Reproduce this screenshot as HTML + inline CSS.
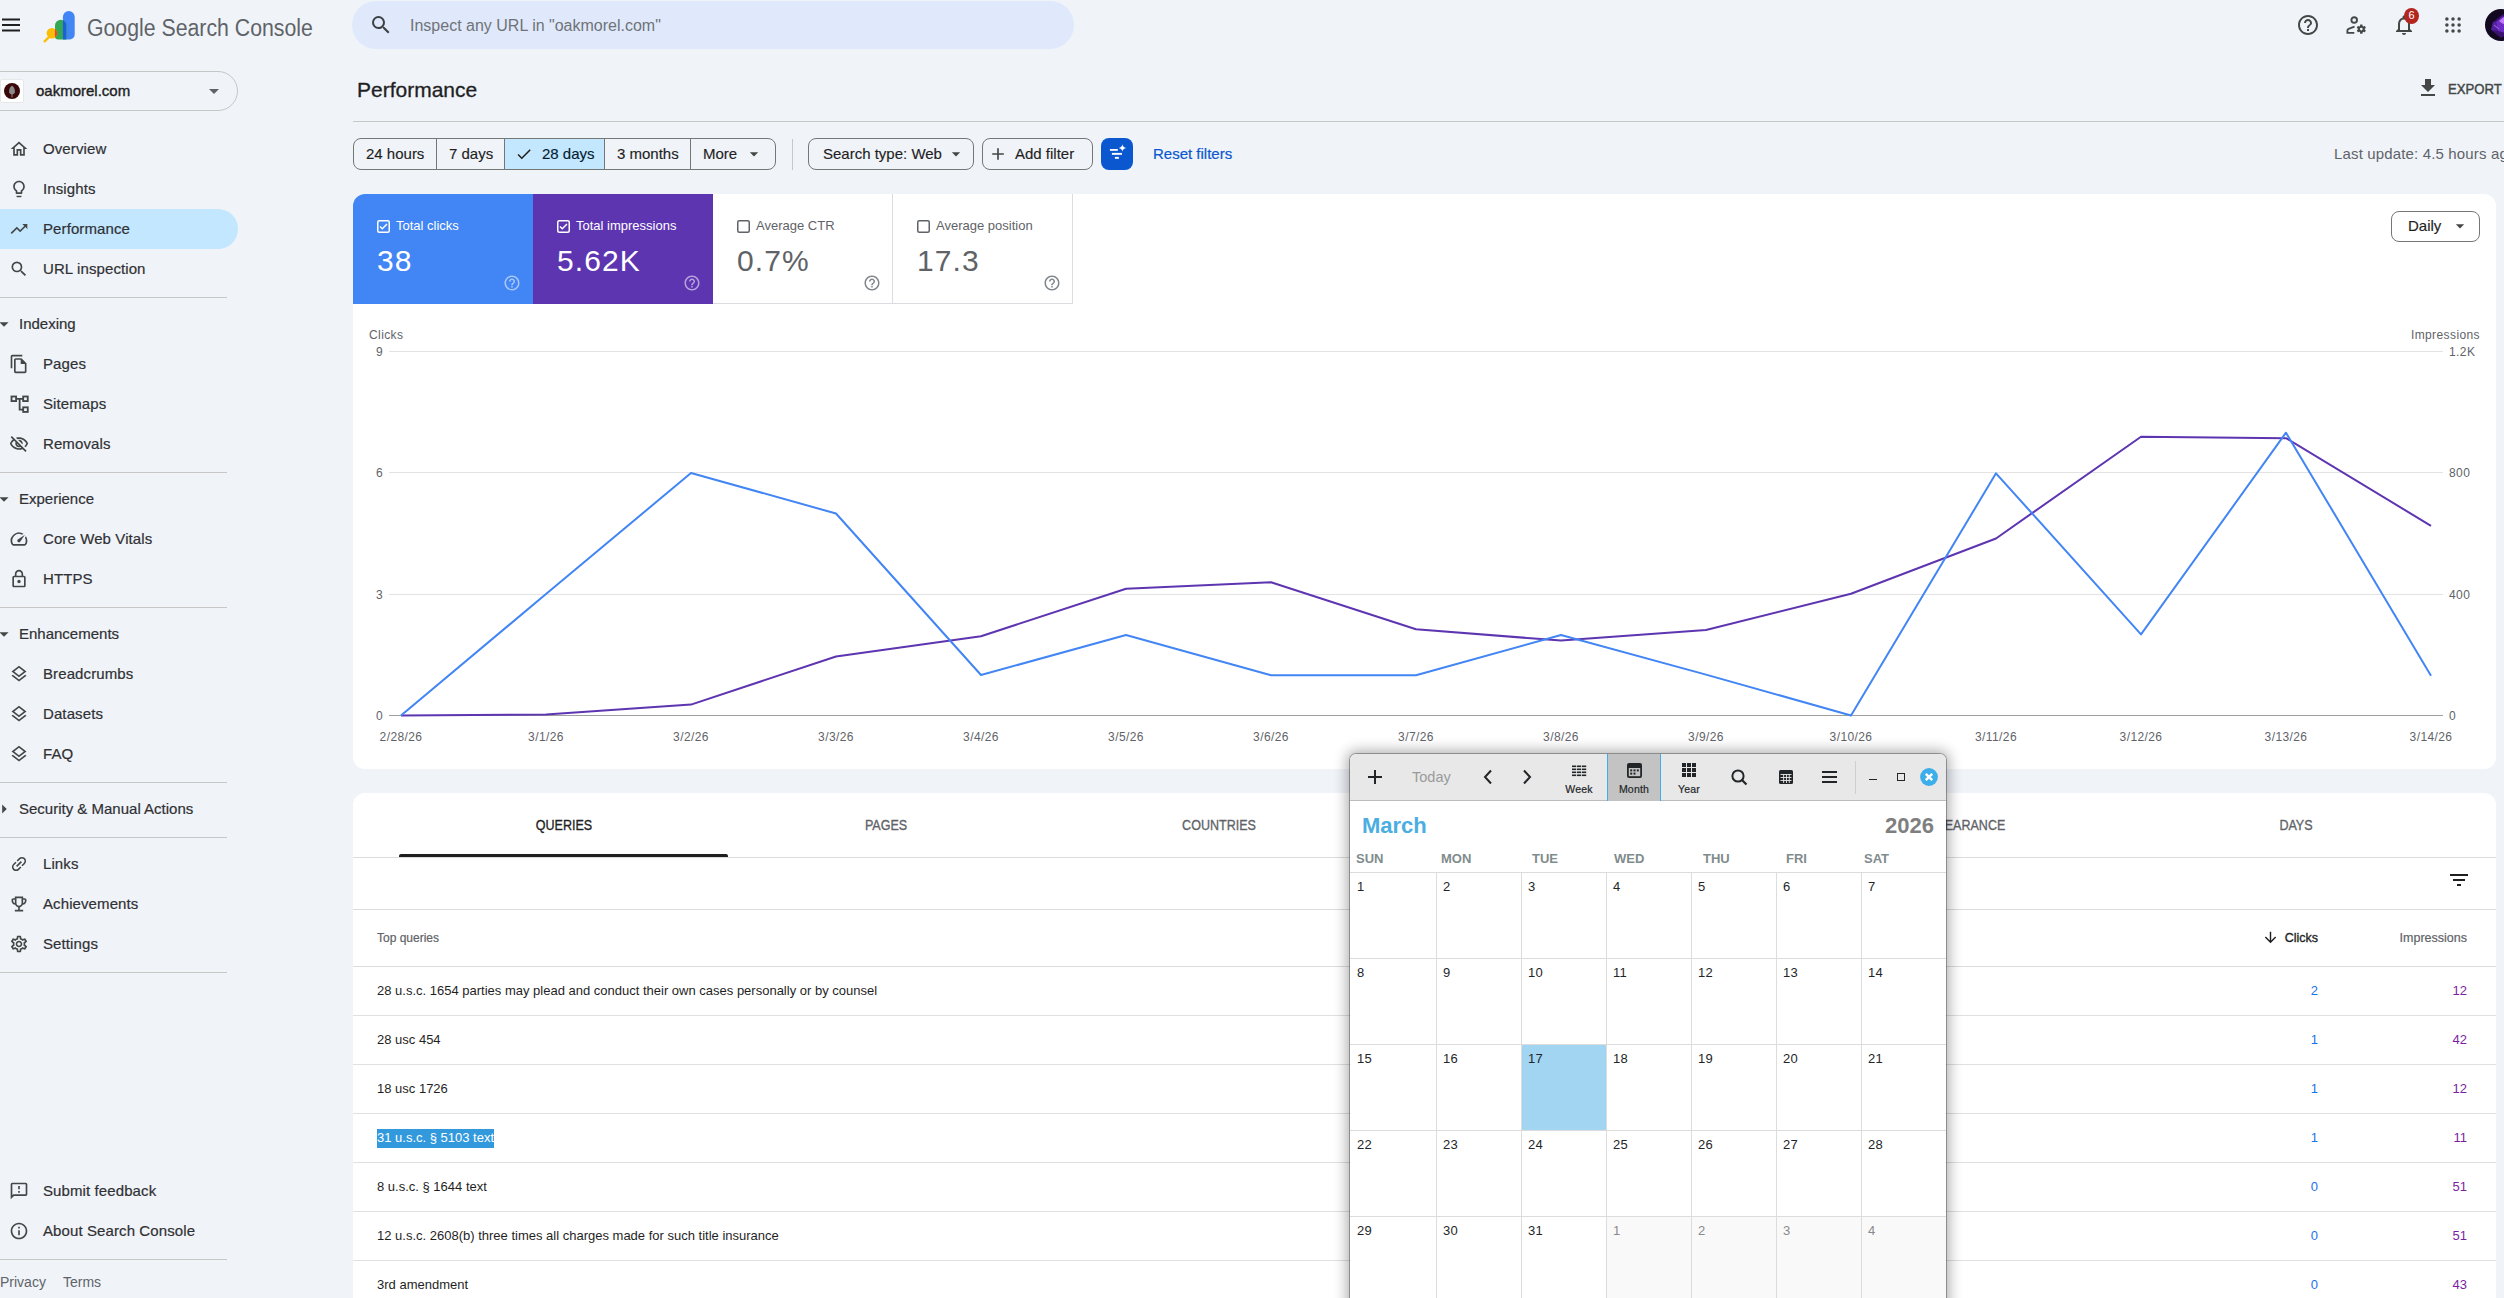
<!DOCTYPE html>
<html><head><meta charset="utf-8">
<style>
*{box-sizing:border-box;margin:0;padding:0}
html,body{width:2504px;height:1298px;overflow:hidden}
body{background:#f0f4f9;font-family:"Liberation Sans",sans-serif;color:#1f1f1f;position:relative}
.a{position:absolute;white-space:nowrap}
svg{display:block}
.nav{position:absolute;left:0;width:238px;height:40px;font-size:15px;color:#303134;line-height:40px}
.nav svg{position:absolute;left:9px;top:10.5px;width:20px;height:20px;fill:#444746}
.nav span{position:absolute;left:43px;top:1px;letter-spacing:0.1px;-webkit-text-stroke:0.2px #303134}
.sec{position:absolute;left:0;height:30px;white-space:nowrap;line-height:30px;font-size:15px;color:#303134}
.sec svg{position:absolute;left:-7px;top:5px;width:22px;height:22px;fill:#444746}
.sec span{position:absolute;left:19px;top:1px;-webkit-text-stroke:0.2px #303134}
.div{position:absolute;left:0;width:227px;height:1px;background:#c7c7c7}
.chip{font-size:15px;line-height:18px;color:#1f1f1f;-webkit-text-stroke:0.15px #1f1f1f}
.ml{font-size:13px;line-height:16px}
.mv{font-size:30px;line-height:34px;letter-spacing:1.1px}
.trow{font-size:13px;line-height:18px;color:#1f1f1f}
.calbl{font-size:10.5px;line-height:14px;color:#232629;text-align:center;-webkit-text-stroke:0.2px #232629;letter-spacing:0.2px}
</style></head><body>

<!-- HEADER -->
<svg class="a" style="left:0;top:12px" width="24" height="24" viewBox="0 0 24 24"><path fill="#1f1f1f" d="M2 19.5h18v-2H2zm0-5.5h18v-2H2zm0-7.5v2h18v-2z"/></svg>
<svg class="a" style="left:0;top:0" width="80" height="48" viewBox="0 0 80 48">
 <defs><clipPath id="gclip"><path d="M55 25.45a5.75 5.75 0 0 1 11.5 0V39.4H58a3 3 0 0 1-3-3z"/></clipPath></defs>
 <path d="M62.9 17a5.9 5.9 0 0 1 11.8 0V34.4a5 5 0 0 1-5 5H62.9z" fill="#4285f4"/>
 <path d="M55 25.45a5.75 5.75 0 0 1 11.5 0V39.4H58a3 3 0 0 1-3-3z" fill="#34a853"/>
 <rect x="62.9" y="19" width="3.6" height="20.4" fill="#1a62d6" clip-path="url(#gclip)"/>
 <path d="M44.6 41.4L48.6 37.4" stroke="#fbbc04" stroke-width="2.3" stroke-linecap="round"/>
 <circle cx="51.9" cy="33.3" r="5.3" fill="#fbbc04"/>
 <g clip-path="url(#gclip)"><circle cx="51.9" cy="33.3" r="5.3" fill="#ea4335"/></g>
</svg>
<div class="a" style="left:87px;top:13px;font-size:23.5px;line-height:30px;color:#5f6368;transform:scaleX(0.905);transform-origin:0 0">Google Search Console</div>

<div class="a" style="left:352px;top:1px;width:722px;height:48px;border-radius:24px;background:#e0e9fb"></div>
<svg class="a" style="left:369px;top:13px" width="24" height="24" viewBox="0 0 24 24"><path fill="#3c4043" d="M15.5 14h-.79l-.28-.27A6.47 6.47 0 0 0 16 9.5 6.5 6.5 0 1 0 9.5 16c1.61 0 3.09-.59 4.23-1.57l.27.28v.79l5 4.99L20.49 19l-4.99-5zm-6 0C7.01 14 5 11.99 5 9.5S7.01 5 9.5 5 14 7.01 14 9.5 11.99 14 9.5 14z"/></svg>
<div class="a" style="left:410px;top:16px;font-size:16px;line-height:20px;color:#6f7378">Inspect any URL in "oakmorel.com"</div>

<!-- right header icons -->
<svg class="a" style="left:2296px;top:13px" width="24" height="24" viewBox="0 0 24 24"><path fill="#444746" d="M11 18h2v-2h-2v2zm1-16C6.48 2 2 6.48 2 12s4.48 10 10 10 10-4.48 10-10S17.52 2 12 2zm0 18c-4.41 0-8-3.59-8-8s3.59-8 8-8 8 3.59 8 8-3.59 8-8 8zm0-14c-2.21 0-4 1.79-4 4h2c0-1.1.9-2 2-2s2 .9 2 2c0 2-3 1.75-3 5h2c0-2.25 3-2.5 3-5 0-2.21-1.79-4-4-4z"/></svg>
<svg class="a" style="left:2344px;top:13px" width="24" height="24" viewBox="0 0 24 24"><circle cx="10.2" cy="7" r="2.8" fill="none" stroke="#444746" stroke-width="1.9"/><path d="M10.5 13.6L4.6 15.8Q3.4 16.3 3.4 17.6V19.9H10.3" fill="none" stroke="#444746" stroke-width="1.9" stroke-linejoin="miter"/><g transform="translate(11.8 10.6) scale(0.46)"><path fill="#444746" d="M19.43 12.98c.04-.32.07-.64.07-.98 0-.34-.03-.66-.07-.98l2.11-1.65c.19-.15.24-.42.12-.64l-2-3.46a.5.5 0 0 0-.61-.22l-2.49 1c-.52-.4-1.08-.73-1.69-.98l-.38-2.65A.488.488 0 0 0 14 2h-4c-.25 0-.46.18-.49.42l-.38 2.65c-.61.25-1.17.59-1.69.98l-2.49-1a.566.566 0 0 0-.18-.03c-.17 0-.34.09-.43.25l-2 3.46c-.13.22-.07.49.12.64l2.11 1.65c-.04.32-.07.65-.07.98 0 .33.03.66.07.98l-2.110 1.65c-.19.15-.24.42-.12.64l2 3.46a.5.5 0 0 0 .61.22l2.49-1c.52.4 1.08.73 1.69.98l.38 2.65c.03.24.24.42.49.42h4c.25 0 .46-.18.49-.42l.38-2.65c.61-.25 1.17-.59 1.69-.98l2.49 1c.06.02.12.03.18.03.17 0 .34-.09.43-.25l2-3.46c.12-.22.07-.49-.12-.64l-2.11-1.65zM12 15a3 3 0 1 1 0-6 3 3 0 0 1 0 6z"/></g></svg>
<svg class="a" style="left:2392px;top:13px" width="24" height="24" viewBox="0 0 24 24"><path fill="#444746" d="M12 22c1.1 0 2-.9 2-2h-4c0 1.1.9 2 2 2zm6-6v-5c0-3.07-1.63-5.64-4.5-6.32V4c0-.83-.67-1.5-1.5-1.5s-1.5.67-1.5 1.5v.68C7.64 5.36 6 7.92 6 11v5l-2 2v1h16v-1l-2-2zm-2 1H8v-6c0-2.48 1.51-4.5 4-4.5s4 2.02 4 4.5v6z"/></svg>
<div class="a" style="left:2404px;top:8px;width:15px;height:16px;border-radius:50%;background:#b3261e;color:#fff;font-size:11px;line-height:15px;text-align:center">6</div>
<svg class="a" style="left:2441px;top:13px" width="24" height="24" viewBox="0 0 24 24"><g fill="#444746"><circle cx="5.9" cy="5.9" r="1.75"/><circle cx="12" cy="5.9" r="1.75"/><circle cx="18.1" cy="5.9" r="1.75"/><circle cx="5.9" cy="12" r="1.75"/><circle cx="12" cy="12" r="1.75"/><circle cx="18.1" cy="12" r="1.75"/><circle cx="5.9" cy="18.1" r="1.75"/><circle cx="12" cy="18.1" r="1.75"/><circle cx="18.1" cy="18.1" r="1.75"/></g></svg>
<svg class="a" style="left:2485px;top:9px" width="32" height="32" viewBox="0 0 32 32"><circle cx="16" cy="16" r="16" fill="#12081f"/><path d="M8 13L18 5 28 11 27 23 16 29 6 21z" fill="#3a136e"/><path d="M11 13L18 7 23 12 21 24 13 22z" fill="#6d2cc4"/><path d="M14 12L19 8 22 13 18 15z" fill="#c07cf7"/><path d="M8 13L11 13 13 22 6 21z" fill="#51209a"/><path d="M9 16L14 20" stroke="#c47dff" stroke-width="0.8"/></svg>

<!-- SIDEBAR -->
<div class="a" style="left:-20px;top:71px;width:258px;height:40px;border:1px solid #c4c7c5;border-radius:20px"></div>
<div class="a" style="left:0;top:79px;width:24px;height:24px;background:#fff;border:1px solid #e8e8e8;border-radius:2px"></div>
<div class="a" style="left:4px;top:83px;width:16px;height:16px;border-radius:50%;background:#3a0808"></div>
<svg class="a" style="left:8px;top:85px" width="8" height="13" viewBox="0 0 8 13"><path d="M4 0.5C1.5 2 0.8 5 1.2 7.5 1.8 9 3 9.2 4 9.2s2.2-.2 2.8-1.7C7.2 5 6.5 2 4 0.5z" fill="#8a8a8a"/><path d="M4 8v4.5" stroke="#8a8a8a" stroke-width="1"/></svg>
<div class="a" style="left:36px;top:81px;font-size:15px;line-height:20px;color:#1f1f1f;-webkit-text-stroke:0.4px #1f1f1f">oakmorel.com</div>
<svg class="a" style="left:202px;top:79px" width="24" height="24" viewBox="0 0 24 24"><path fill="#5f6368" d="M7 10l5 5 5-5z"/></svg>

<div class="a" style="left:0;top:209px;width:238px;height:40px;border-radius:0 20px 20px 0;background:#c2e7ff"></div>
<div class="nav" style="top:128px"><svg viewBox="0 0 24 24"><path d="M12 5.69l5 4.5V18h-2v-6H9v6H7v-7.81l5-4.5M12 3L2 12h3v8h6v-6h2v6h6v-8h3L12 3z"/></svg><span>Overview</span></div>
<div class="nav" style="top:168px"><svg viewBox="0 0 24 24"><path d="M9 21c0 .55.45 1 1 1h4c.55 0 1-.45 1-1v-1H9v1zm3-19C8.14 2 5 5.14 5 9c0 2.38 1.19 4.47 3 5.74V17c0 .55.45 1 1 1h6c.55 0 1-.45 1-1v-2.26c1.81-1.27 3-3.36 3-5.74 0-3.86-3.14-7-7-7zm2.85 11.1l-.85.6V16h-4v-2.3l-.85-.6C7.8 12.16 7 10.63 7 9c0-2.76 2.24-5 5-5s5 2.24 5 5c0 1.63-.8 3.16-2.15 4.1z"/></svg><span>Insights</span></div>
<div class="nav" style="top:208px"><svg viewBox="0 0 24 24"><path d="M16 6l2.29 2.29-4.88 4.88-4-4L2 16.59 3.41 18l6-6 4 4 6.3-6.29L22 12V6z"/></svg><span>Performance</span></div>
<div class="nav" style="top:248px"><svg viewBox="0 0 24 24"><path d="M15.5 14h-.79l-.28-.27A6.47 6.47 0 0 0 16 9.5 6.5 6.5 0 1 0 9.5 16c1.61 0 3.09-.59 4.23-1.57l.27.28v.79l5 4.99L20.49 19l-4.99-5zm-6 0C7.01 14 5 11.99 5 9.5S7.01 5 9.5 5 14 7.01 14 9.5 11.99 14 9.5 14z"/></svg><span>URL inspection</span></div>
<div class="nav" style="top:343px"><svg viewBox="0 0 24 24"><path d="M16 1H4c-1.1 0-2 .9-2 2v14h2V3h12V1zm-1 4H8c-1.1 0-1.99.9-1.99 2L6 21c0 1.1.89 2 1.99 2H19c1.1 0 2-.9 2-2V11l-6-6zM8 21V7h6v5h5v9H8z"/></svg><span>Pages</span></div>
<div class="nav" style="top:383px"><svg viewBox="0 0 24 24"><g fill="none" stroke="#444746" stroke-width="2.2"><rect x="3" y="3" width="5.5" height="5.5"/><rect x="17" y="3" width="5.5" height="5.5"/><rect x="17" y="16" width="5.5" height="5.5"/><path d="M8.5 5.75H17M12.75 5.75v13H17"/></g></svg><span>Sitemaps</span></div>
<div class="nav" style="top:423px"><svg viewBox="0 0 24 24"><path d="M12 6c3.79 0 7.17 2.13 8.82 5.5-.59 1.22-1.42 2.27-2.41 3.12l1.41 1.41c1.39-1.23 2.49-2.77 3.18-4.53C21.27 7.11 17 4 12 4c-1.27 0-2.49.2-3.64.57l1.65 1.65C10.66 6.09 11.32 6 12 6zm-1.07 1.14L13 9.21c.57.25 1.03.71 1.28 1.28l2.07 2.07c.08-.34.14-.7.14-1.07C16.5 9.01 14.48 7 12 7c-.37 0-.72.05-1.07.14zM2.01 3.87l2.68 2.68C3.06 7.83 1.77 9.530 1 11.5 2.73 15.89 7 19 12 19c1.52 0 2.98-.29 4.32-.82l3.420 3.42 1.41-1.41L3.42 2.45 2.01 3.87zm7.5 7.5l2.61 2.61c-.04.01-.08.02-.12.02-1.38 0-2.5-1.12-2.5-2.5 0-.05.01-.08.01-.13zm-3.4-3.4l1.75 1.75c-.23.55-.36 1.15-.36 1.78 0 2.48 2.02 4.5 4.5 4.5.63 0 1.23-.13 1.77-.36l.98.98c-.88.24-1.8.38-2.75.38-3.79 0-7.17-2.13-8.820-5.5.7-1.43 1.72-2.61 2.93-3.53z"/></svg><span>Removals</span></div>
<div class="nav" style="top:518px"><svg viewBox="0 0 24 24"><path d="M20.38 8.57l-1.23 1.85a8 8 0 0 1-.22 7.58H5.07A8 8 0 0 1 15.58 6.85l1.85-1.23A10 10 0 0 0 3.35 19a2 2 0 0 0 1.72 1h13.85a2 2 0 0 0 1.74-1 10 10 0 0 0-.27-10.44zm-9.79 6.84a2 2 0 0 0 2.830 0l5.66-8.49-8.49 5.66a2 2 0 0 0 0 2.83z"/></svg><span>Core Web Vitals</span></div>
<div class="nav" style="top:558px"><svg viewBox="0 0 24 24"><path d="M18 8h-1V6c0-2.76-2.24-5-5-5S7 3.24 7 6v2H6c-1.1 0-2 .9-2 2v10c0 1.1.9 2 2 2h12c1.1 0 2-.9 2-2V10c0-1.1-.9-2-2-2zM9 6c0-1.66 1.34-3 3-3s3 1.34 3 3v2H9V6zm9 14H6V10h12v10zm-6-3c1.1 0 2-.9 2-2s-.9-2-2-2-2 .9-2 2 .9 2 2 2z"/></svg><span>HTTPS</span></div>
<div class="nav" style="top:653px"><svg viewBox="0 0 24 24"><path d="M11.99 18.54l-7.37-5.73L3 14.07l9 7 9-7-1.63-1.27-7.38 5.74zM12 16l7.36-5.73L21 9l-9-7-9 7 1.63 1.27L12 16zm0-11.47L17.74 9 12 13.47 6.26 9 12 4.53z"/></svg><span>Breadcrumbs</span></div>
<div class="nav" style="top:693px"><svg viewBox="0 0 24 24"><path d="M11.99 18.54l-7.37-5.73L3 14.07l9 7 9-7-1.63-1.27-7.38 5.74zM12 16l7.36-5.73L21 9l-9-7-9 7 1.63 1.27L12 16zm0-11.47L17.74 9 12 13.47 6.26 9 12 4.53z"/></svg><span>Datasets</span></div>
<div class="nav" style="top:733px"><svg viewBox="0 0 24 24"><path d="M11.99 18.54l-7.37-5.73L3 14.07l9 7 9-7-1.63-1.27-7.38 5.74zM12 16l7.36-5.73L21 9l-9-7-9 7 1.63 1.27L12 16zm0-11.47L17.74 9 12 13.47 6.26 9 12 4.53z"/></svg><span>FAQ</span></div>
<div class="nav" style="top:843px"><svg viewBox="0 0 24 24"><g transform="rotate(-45 12 12)"><path d="M3.9 12c0-1.71 1.39-3.1 3.1-3.1h4V7H7c-2.760 0-5 2.24-5 5s2.24 5 5 5h4v-1.9H7c-1.71 0-3.1-1.39-3.1-3.1zM8 13h8v-2H8v2zm9-6h-4v1.9h4c1.71 0 3.1 1.39 3.1 3.1s-1.39 3.1-3.1 3.1h-4V17h4c2.76 0 5-2.24 5-5s-2.24-5-5-5z"/></g></svg><span>Links</span></div>
<div class="nav" style="top:883px"><svg viewBox="0 0 24 24"><path d="M19 5h-2V3H7v2H5c-1.1 0-2 .9-2 2v1c0 2.55 1.92 4.63 4.39 4.94.63 1.5 1.98 2.63 3.61 2.96V19H7v2h10v-2h-4v-3.1c1.63-.33 2.98-1.46 3.61-2.96C19.08 12.63 21 10.55 21 8V7c0-1.1-.9-2-2-2zM5 8V7h2v3.82C5.84 10.4 5 9.3 5 8zm7 6c-1.65 0-3-1.35-3-3V5h6v6c0 1.65-1.35 3-3 3zm7-6c0 1.3-.84 2.4-2 2.82V7h2v1z"/></svg><span>Achievements</span></div>
<div class="nav" style="top:923px"><svg viewBox="0 0 24 24"><path d="M19.43 12.98c.04-.32.07-.64.07-.98 0-.34-.03-.66-.07-.98l2.11-1.65c.19-.15.24-.42.12-.64l-2-3.46a.5.5 0 0 0-.61-.22l-2.49 1c-.52-.4-1.08-.73-1.69-.98l-.38-2.65A.488.488 0 0 0 14 2h-4c-.25 0-.46.18-.49.42l-.38 2.65c-.61.25-1.17.59-1.69.98l-2.49-1a.566.566 0 0 0-.18-.03c-.17 0-.34.09-.43.25l-2 3.46c-.13.22-.07.49.12.64l2.11 1.65c-.04.32-.07.65-.07.98 0 .33.03.66.07.98l-2.11 1.65c-.19.15-.24.42-.12.64l2 3.46a.5.5 0 0 0 .61.22l2.49-1c.52.4 1.08.73 1.69.98l.38 2.65c.03.24.24.42.49.42h4c.25 0 .46-.18.49-.42l.38-2.65c.61-.25 1.17-.59 1.690-.98l2.49 1c.06.02.12.03.18.03.17 0 .34-.09.43-.25l2-3.46c.12-.22.07-.49-.12-.64l-2.11-1.65zm-1.98-1.71c.04.31.05.52.05.73 0 .21-.02.43-.05.73l-.14 1.13.89.7 1.08.84-.7 1.21-1.27-.51-1.04-.42-.9.68c-.43.32-.84.56-1.25.73l-1.06.43-.16 1.13-.2 1.35h-1.4l-.19-1.35-.16-1.13-1.06-.43c-.43-.18-.83-.41-1.23-.71l-.91-.7-1.06.43-1.27.51-.7-1.21 1.08-.84.89-.7-.14-1.13c-.03-.31-.05-.54-.05-.74s.02-.43.05-.73l.14-1.13-.89-.7-1.08-.84.7-1.21 1.27.51 1.04.42.9-.68c.43-.32.84-.56 1.25-.73l1.06-.43.16-1.13.2-1.35h1.39l.19 1.35.16 1.13 1.06.43c.43.18.83.41 1.23.71l.91.7 1.06-.43 1.27-.51.7 1.21-1.07.85-.89.7.14 1.130zM12 8c-2.21 0-4 1.79-4 4s1.79 4 4 4 4-1.79 4-4-1.79-4-4-4zm0 6c-1.1 0-2-.9-2-2s.9-2 2-2 2 .9 2 2-.9 2-2 2z"/></svg><span>Settings</span></div>
<div class="nav" style="top:1170px"><svg viewBox="0 0 24 24"><path d="M20 2H4c-1.1 0-1.99.9-1.99 2L2 22l4-4h14c1.1 0 2-.9 2-2V4c0-1.1-.9-2-2-2zm0 14H5.17l-.59.59-.58.58V4h16v12zm-9-4h2v2h-2zm0-6h2v4h-2z"/></svg><span>Submit feedback</span></div>
<div class="nav" style="top:1210px"><svg viewBox="0 0 24 24"><path d="M11 7h2v2h-2zm0 4h2v6h-2zm1-9C6.48 2 2 6.48 2 12s4.48 10 10 10 10-4.48 10-10S17.52 2 12 2zm0 18c-4.41 0-8-3.590-8-8s3.59-8 8-8 8 3.59 8 8-3.59 8-8 8z"/></svg><span>About Search Console</span></div>
<div class="sec" style="top:308px"><svg viewBox="0 0 24 24"><path d="M7 10l5 5 5-5z"/></svg><span>Indexing</span></div>
<div class="sec" style="top:483px"><svg viewBox="0 0 24 24"><path d="M7 10l5 5 5-5z"/></svg><span>Experience</span></div>
<div class="sec" style="top:618px"><svg viewBox="0 0 24 24"><path d="M7 10l5 5 5-5z"/></svg><span>Enhancements</span></div>
<div class="sec" style="top:793px"><svg viewBox="0 0 24 24"><path d="M10 17l5-5-5-5z"/></svg><span>Security &amp; Manual Actions</span></div>
<div class="div" style="top:297px"></div>
<div class="div" style="top:472px"></div>
<div class="div" style="top:607px"></div>
<div class="div" style="top:782px"></div>
<div class="div" style="top:837px"></div>
<div class="div" style="top:972px"></div>
<div class="div" style="top:1259px"></div>
<div class="a" style="left:0;top:1273px;font-size:14px;line-height:18px;color:#5f6368">Privacy</div>
<div class="a" style="left:63px;top:1273px;font-size:14px;line-height:18px;color:#5f6368">Terms</div>

<!-- MAIN TOP -->
<div class="a" style="left:357px;top:78px;font-size:21px;line-height:24px;color:#1f1f1f;-webkit-text-stroke:0.3px #1f1f1f">Performance</div>
<svg class="a" style="left:2416px;top:76px" width="24" height="24" viewBox="0 0 24 24"><path fill="#444746" d="M19 9h-4V3H9v6H5l7 7 7-7zM5 18v2h14v-2H5z"/></svg>
<div class="a" style="left:2448px;top:80px;font-size:15px;line-height:18px;color:#444746;-webkit-text-stroke:0.45px #444746;transform:scaleX(0.875);transform-origin:0 0">EXPORT</div>
<div class="a" style="left:353px;top:121px;width:2151px;height:1px;background:#c7c7c7"></div>

<div class="a" style="left:353px;top:138px;width:423px;height:32px;border:1px solid #747775;border-radius:8px;overflow:hidden">
 <div class="a" style="left:150px;top:0;width:100px;height:30px;background:#c2e7ff"></div>
 <div class="a" style="left:82px;top:0;width:1px;height:30px;background:#747775"></div>
 <div class="a" style="left:150px;top:0;width:1px;height:30px;background:#747775"></div>
 <div class="a" style="left:250px;top:0;width:1px;height:30px;background:#747775"></div>
 <div class="a" style="left:336px;top:0;width:1px;height:30px;background:#747775"></div>
</div>
<div class="a chip" style="left:366px;top:145px">24 hours</div>
<div class="a chip" style="left:449px;top:145px">7 days</div>
<svg class="a" style="left:515px;top:145px" width="18" height="18" viewBox="0 0 24 24"><path fill="#1f1f1f" d="M9 16.17L4.83 12l-1.42 1.41L9 19 21 7l-1.41-1.41z"/></svg>
<div class="a chip" style="left:542px;top:145px;color:#001d35">28 days</div>
<div class="a chip" style="left:617px;top:145px">3 months</div>
<div class="a chip" style="left:703px;top:145px">More</div>
<svg class="a" style="left:744px;top:144px" width="20" height="20" viewBox="0 0 24 24"><path fill="#444746" d="M7 10l5 5 5-5z"/></svg>
<div class="a" style="left:792px;top:139px;width:1px;height:31px;background:#c7c7c7"></div>
<div class="a" style="left:808px;top:138px;width:166px;height:32px;border:1px solid #747775;border-radius:8px"></div>
<div class="a chip" style="left:823px;top:145px">Search type: Web</div>
<svg class="a" style="left:946px;top:144px" width="20" height="20" viewBox="0 0 24 24"><path fill="#444746" d="M7 10l5 5 5-5z"/></svg>
<div class="a" style="left:982px;top:138px;width:111px;height:32px;border:1px solid #747775;border-radius:8px"></div>
<svg class="a" style="left:988px;top:144px" width="20" height="20" viewBox="0 0 24 24"><path fill="#444746" d="M19 13h-6v6h-2v-6H5v-2h6V5h2v6h6v2z"/></svg>
<div class="a chip" style="left:1015px;top:145px">Add filter</div>
<div class="a" style="left:1101px;top:138px;width:32px;height:32px;border-radius:8px;background:#0b57d0"></div>
<svg class="a" style="left:1101px;top:138px" width="32" height="32" viewBox="0 0 32 32"><g fill="#fff"><rect x="8.9" y="11" width="7.9" height="1.8"/><rect x="10.9" y="14.9" width="10.1" height="1.9"/><rect x="13.9" y="18.9" width="4" height="1.9"/><path d="M21.4 6.2Q21.9 9.4 25.1 9.9Q21.9 10.4 21.4 13.6Q20.9 10.4 17.7 9.9Q20.9 9.4 21.4 6.2z"/></g></svg>
<div class="a" style="left:1153px;top:145px;font-size:15px;line-height:18px;color:#0b57d0;-webkit-text-stroke:0.2px #0b57d0">Reset filters</div>
<div class="a" style="left:2334px;top:145px;font-size:15px;line-height:18px;color:#5f6368;letter-spacing:0.15px">Last update: 4.5 hours ago</div>

<!-- CHART CARD -->
<div class="a" style="left:353px;top:194px;width:2143px;height:575px;background:#fff;border-radius:12px;overflow:hidden">
 <div class="a" style="left:0;top:0;width:180px;height:110px;background:#4285f4"></div>
 <div class="a" style="left:180px;top:0;width:180px;height:110px;background:#5e35b1"></div>
 <div class="a" style="left:360px;top:0;width:360px;height:110px;border-right:1px solid #dadce0;border-bottom:1px solid #dadce0"></div>
 <div class="a" style="left:539px;top:0;width:1px;height:110px;background:#dadce0"></div>
</div>

<svg class="a" style="left:377px;top:220px" width="13" height="13" viewBox="0 0 13 13"><rect x="0.75" y="0.75" width="11.5" height="11.5" rx="1.5" fill="none" stroke="#fff" stroke-width="1.5"/><path d="M3 6.5l2.3 2.3L10 4" fill="none" stroke="#fff" stroke-width="1.5"/></svg>
<div class="a ml" style="left:396px;top:218px;color:#fff">Total clicks</div>
<div class="a mv" style="left:377px;top:244px;color:#fff">38</div>
<svg class="a" style="left:503px;top:274px" width="18" height="18" viewBox="0 0 24 24"><path fill="rgba(255,255,255,0.55)" d="M11 18h2v-2h-2v2zm1-16C6.48 2 2 6.48 2 12s4.48 10 10 10 10-4.48 10-10S17.52 2 12 2zm0 18c-4.41 0-8-3.59-8-8s3.59-8 8-8 8 3.59 8 8-3.59 8-8 8zm0-14c-2.21 0-4 1.79-4 4h2c0-1.1.9-2 2-2s2 .9 2 2c0 2-3 1.75-3 5h2c0-2.25 3-2.5 3-5 0-2.21-1.79-4-4-4z"/></svg>
<svg class="a" style="left:557px;top:220px" width="13" height="13" viewBox="0 0 13 13"><rect x="0.75" y="0.75" width="11.5" height="11.5" rx="1.5" fill="none" stroke="#fff" stroke-width="1.5"/><path d="M3 6.5l2.3 2.3L10 4" fill="none" stroke="#fff" stroke-width="1.5"/></svg>
<div class="a ml" style="left:576px;top:218px;color:#fff">Total impressions</div>
<div class="a mv" style="left:557px;top:244px;color:#fff">5.62K</div>
<svg class="a" style="left:683px;top:274px" width="18" height="18" viewBox="0 0 24 24"><path fill="rgba(255,255,255,0.55)" d="M11 18h2v-2h-2v2zm1-16C6.48 2 2 6.48 2 12s4.48 10 10 10 10-4.48 10-10S17.52 2 12 2zm0 18c-4.41 0-8-3.59-8-8s3.59-8 8-8 8 3.59 8 8-3.59 8-8 8zm0-14c-2.21 0-4 1.79-4 4h2c0-1.1.9-2 2-2s2 .9 2 2c0 2-3 1.75-3 5h2c0-2.25 3-2.5 3-5 0-2.21-1.79-4-4-4z"/></svg>
<svg class="a" style="left:737px;top:220px" width="13" height="13" viewBox="0 0 13 13"><rect x="0.75" y="0.75" width="11.5" height="11.5" rx="1.5" fill="none" stroke="#5f6368" stroke-width="1.5"/></svg>
<div class="a ml" style="left:756px;top:218px;color:#5f6368">Average CTR</div>
<div class="a mv" style="left:737px;top:244px;color:#5f6368">0.7%</div>
<svg class="a" style="left:863px;top:274px" width="18" height="18" viewBox="0 0 24 24"><path fill="#80868b" d="M11 18h2v-2h-2v2zm1-16C6.48 2 2 6.48 2 12s4.48 10 10 10 10-4.48 10-10S17.52 2 12 2zm0 18c-4.41 0-8-3.59-8-8s3.59-8 8-8 8 3.59 8 8-3.59 8-8 8zm0-14c-2.21 0-4 1.79-4 4h2c0-1.1.9-2 2-2s2 .9 2 2c0 2-3 1.75-3 5h2c0-2.25 3-2.5 3-5 0-2.21-1.79-4-4-4z"/></svg>
<svg class="a" style="left:917px;top:220px" width="13" height="13" viewBox="0 0 13 13"><rect x="0.75" y="0.75" width="11.5" height="11.5" rx="1.5" fill="none" stroke="#5f6368" stroke-width="1.5"/></svg>
<div class="a ml" style="left:936px;top:218px;color:#5f6368">Average position</div>
<div class="a mv" style="left:917px;top:244px;color:#5f6368">17.3</div>
<svg class="a" style="left:1043px;top:274px" width="18" height="18" viewBox="0 0 24 24"><path fill="#80868b" d="M11 18h2v-2h-2v2zm1-16C6.48 2 2 6.48 2 12s4.48 10 10 10 10-4.48 10-10S17.52 2 12 2zm0 18c-4.41 0-8-3.59-8-8s3.59-8 8-8 8 3.59 8 8-3.59 8-8 8zm0-14c-2.21 0-4 1.79-4 4h2c0-1.1.9-2 2-2s2 .9 2 2c0 2-3 1.75-3 5h2c0-2.25 3-2.5 3-5 0-2.21-1.79-4-4-4z"/></svg>
<div class="a" style="left:2391px;top:211px;width:89px;height:31px;border:1px solid #747775;border-radius:8px;background:#fff"></div>
<div class="a chip" style="left:2408px;top:217px">Daily</div>
<svg class="a" style="left:2450px;top:216px" width="20" height="20" viewBox="0 0 24 24"><path fill="#444746" d="M7 10l5 5 5-5z"/></svg>
<svg class="a" style="left:0;top:0" width="2504" height="1298" viewBox="0 0 2504 1298">
<rect x="389" y="351" width="2054" height="1" fill="#e3e3e3"/>
<rect x="389" y="472" width="2054" height="1" fill="#e3e3e3"/>
<rect x="389" y="594" width="2054" height="1" fill="#e3e3e3"/>
<rect x="389" y="715" width="2054" height="1" fill="#9e9e9e"/>
<polyline points="401,715.5 546,714.4 691,704.6 836,656.5 981,636.2 1126,588.8 1271,582.3 1416,629.3 1561,640.6 1706,630 1851,593.7 1996,538.5 2141,436.7 2286,438.2 2431,525.8" fill="none" stroke="#5e35b1" stroke-width="2" stroke-linejoin="round"/>
<polyline points="401,715.5 546,594 691,473 836,513.5 981,675 1126,635 1271,675.3 1416,675.3 1561,635 1706,674.6 1851,715.5 1996,473.3 2141,634.4 2286,432.7 2431,675.7" fill="none" stroke="#4285f4" stroke-width="2" stroke-linejoin="round"/>
<g font-family="Liberation Sans" font-size="12" fill="#5f6368" letter-spacing="0.4">
<text x="369" y="338.5">Clicks</text>
<text x="2480" y="338.5" text-anchor="end">Impressions</text>
<text x="383" y="355.5" text-anchor="end">9</text>
<text x="383" y="476.5" text-anchor="end">6</text>
<text x="383" y="598.5" text-anchor="end">3</text>
<text x="383" y="719.5" text-anchor="end">0</text>
<text x="2449" y="355.5">1.2K</text>
<text x="2449" y="476.5">800</text>
<text x="2449" y="598.5">400</text>
<text x="2449" y="719.5">0</text>
<text x="401" y="740.5" text-anchor="middle">2/28/26</text>
<text x="546" y="740.5" text-anchor="middle">3/1/26</text>
<text x="691" y="740.5" text-anchor="middle">3/2/26</text>
<text x="836" y="740.5" text-anchor="middle">3/3/26</text>
<text x="981" y="740.5" text-anchor="middle">3/4/26</text>
<text x="1126" y="740.5" text-anchor="middle">3/5/26</text>
<text x="1271" y="740.5" text-anchor="middle">3/6/26</text>
<text x="1416" y="740.5" text-anchor="middle">3/7/26</text>
<text x="1561" y="740.5" text-anchor="middle">3/8/26</text>
<text x="1706" y="740.5" text-anchor="middle">3/9/26</text>
<text x="1851" y="740.5" text-anchor="middle">3/10/26</text>
<text x="1996" y="740.5" text-anchor="middle">3/11/26</text>
<text x="2141" y="740.5" text-anchor="middle">3/12/26</text>
<text x="2286" y="740.5" text-anchor="middle">3/13/26</text>
<text x="2431" y="740.5" text-anchor="middle">3/14/26</text>
</g></svg>
<div class="a" style="left:353px;top:793px;width:2143px;height:560px;background:#fff;border-radius:12px"></div>
<div class="a" style="left:413.6px;width:300px;text-align:center;top:815px;font-size:15px;line-height:20px;color:#1f1f1f;-webkit-text-stroke:0.35px #1f1f1f;transform:scaleX(0.835)">QUERIES</div>
<div class="a" style="left:736px;width:300px;text-align:center;top:815px;font-size:15px;line-height:20px;color:#5f6368;-webkit-text-stroke:0.35px #5f6368;transform:scaleX(0.835)">PAGES</div>
<div class="a" style="left:1068.8px;width:300px;text-align:center;top:815px;font-size:15px;line-height:20px;color:#5f6368;-webkit-text-stroke:0.35px #5f6368;transform:scaleX(0.835)">COUNTRIES</div>
<div class="a" style="left:1407.5px;width:300px;text-align:center;top:815px;font-size:15px;line-height:20px;color:#5f6368;-webkit-text-stroke:0.35px #5f6368;transform:scaleX(0.835)">DEVICES</div>
<div class="a" style="left:1785px;width:300px;text-align:center;top:815px;font-size:15px;line-height:20px;color:#5f6368;-webkit-text-stroke:0.35px #5f6368;transform:scaleX(0.835)">SEARCH APPEARANCE</div>
<div class="a" style="left:2146px;width:300px;text-align:center;top:815px;font-size:15px;line-height:20px;color:#5f6368;-webkit-text-stroke:0.35px #5f6368;transform:scaleX(0.835)">DAYS</div>
<div class="a" style="left:399px;top:854px;width:329px;height:3px;background:#1f1f1f;border-radius:2px 2px 0 0"></div>
<div class="a" style="left:353px;top:857px;width:2143px;height:1px;background:#dcdcdc"></div>
<svg class="a" style="left:2447px;top:868px" width="24" height="24" viewBox="0 0 24 24"><path fill="#1f1f1f" d="M10 18h4v-2h-4v2zM3 6v2h18V6H3zm3 7h12v-2H6v2z"/></svg>
<div class="a" style="left:353px;top:909px;width:2143px;height:1px;background:#dcdcdc"></div>
<div class="a" style="left:377px;top:930px;font-size:12px;line-height:16px;color:#5f6368;-webkit-text-stroke:0.2px #5f6368">Top queries</div>
<svg class="a" style="left:2262px;top:929px" width="17" height="17" viewBox="0 0 24 24"><path fill="#1f1f1f" d="M20 12l-1.41-1.41L13 16.17V4h-2v12.17l-5.58-5.59L4 12l8 8 8-8z"/></svg>
<div class="a" style="left:2218px;width:100px;text-align:right;top:930px;font-size:12.5px;line-height:16px;color:#1f1f1f;-webkit-text-stroke:0.35px #1f1f1f">Clicks</div>
<div class="a" style="left:2367px;width:100px;text-align:right;top:930px;font-size:12.5px;line-height:16px;color:#5f6368;-webkit-text-stroke:0.2px #5f6368">Impressions</div>
<div class="a" style="left:353px;top:966px;width:2143px;height:1px;background:#dcdcdc"></div>
<div class="a trow" style="left:377px;top:982px">28 u.s.c. 1654 parties may plead and conduct their own cases personally or by counsel</div>
<div class="a trow" style="left:2218px;width:100px;text-align:right;top:982px;color:#1a73e8">2</div>
<div class="a trow" style="left:2367px;width:100px;text-align:right;top:982px;color:#7b1fa2">12</div>
<div class="a" style="left:353px;top:1015px;width:2143px;height:1px;background:#e0e0e0"></div>
<div class="a trow" style="left:377px;top:1031px">28 usc 454</div>
<div class="a trow" style="left:2218px;width:100px;text-align:right;top:1031px;color:#1a73e8">1</div>
<div class="a trow" style="left:2367px;width:100px;text-align:right;top:1031px;color:#7b1fa2">42</div>
<div class="a" style="left:353px;top:1064px;width:2143px;height:1px;background:#e0e0e0"></div>
<div class="a trow" style="left:377px;top:1080px">18 usc 1726</div>
<div class="a trow" style="left:2218px;width:100px;text-align:right;top:1080px;color:#1a73e8">1</div>
<div class="a trow" style="left:2367px;width:100px;text-align:right;top:1080px;color:#7b1fa2">12</div>
<div class="a" style="left:353px;top:1113px;width:2143px;height:1px;background:#e0e0e0"></div>
<div class="a" style="left:377px;top:1129px;width:117px;height:19px;background:#3399dd"></div>
<div class="a trow" style="left:377px;top:1129px;color:#fff">31 u.s.c. § 5103 text</div>
<div class="a trow" style="left:2218px;width:100px;text-align:right;top:1129px;color:#1a73e8">1</div>
<div class="a trow" style="left:2367px;width:100px;text-align:right;top:1129px;color:#7b1fa2">11</div>
<div class="a" style="left:353px;top:1162px;width:2143px;height:1px;background:#e0e0e0"></div>
<div class="a trow" style="left:377px;top:1178px">8 u.s.c. § 1644 text</div>
<div class="a trow" style="left:2218px;width:100px;text-align:right;top:1178px;color:#1a73e8">0</div>
<div class="a trow" style="left:2367px;width:100px;text-align:right;top:1178px;color:#7b1fa2">51</div>
<div class="a" style="left:353px;top:1211px;width:2143px;height:1px;background:#e0e0e0"></div>
<div class="a trow" style="left:377px;top:1227px">12 u.s.c. 2608(b) three times all charges made for such title insurance</div>
<div class="a trow" style="left:2218px;width:100px;text-align:right;top:1227px;color:#1a73e8">0</div>
<div class="a trow" style="left:2367px;width:100px;text-align:right;top:1227px;color:#7b1fa2">51</div>
<div class="a" style="left:353px;top:1260px;width:2143px;height:1px;background:#e0e0e0"></div>
<div class="a trow" style="left:377px;top:1276px">3rd amendment</div>
<div class="a trow" style="left:2218px;width:100px;text-align:right;top:1276px;color:#1a73e8">0</div>
<div class="a trow" style="left:2367px;width:100px;text-align:right;top:1276px;color:#7b1fa2">43</div>
<div class="a" style="left:353px;top:1309px;width:2143px;height:1px;background:#e0e0e0"></div>
<div class="a" style="left:1350px;top:754px;width:596px;height:600px;background:#fff;border-radius:6px 6px 0 0;box-shadow:0 0 14px 3px rgba(0,0,0,0.33),0 0 0 1px rgba(0,0,0,0.3);overflow:hidden">
 <div class="a" style="left:0;top:0;width:596px;height:47px;background:#e8e8e8;border-bottom:1px solid #bcbcbc"></div>
 <div class="a" style="left:257px;top:0;width:54px;height:47px;background:#c3c3c3;border-left:1px solid #3daee9;border-right:1px solid #3daee9"></div>
</div>
<svg class="a" style="left:1367px;top:769px" width="16" height="16" viewBox="0 0 16 16"><path d="M8 1v14M1 8h14" stroke="#232629" stroke-width="2"/></svg>
<div class="a" style="left:1412px;top:769px;font-size:14.5px;line-height:16px;color:#9a9a9a">Today</div>
<svg class="a" style="left:1483px;top:769px" width="10" height="16" viewBox="0 0 10 16"><path d="M8 1.5L2 8l6 6.5" fill="none" stroke="#232629" stroke-width="2"/></svg>
<svg class="a" style="left:1522px;top:769px" width="10" height="16" viewBox="0 0 10 16"><path d="M2 1.5L8 8l-6 6.5" fill="none" stroke="#232629" stroke-width="2"/></svg>
<svg class="a" style="left:1572px;top:765px" width="15" height="12" viewBox="0 0 15 12"><g fill="#232629"><rect x="0" y="0.5" width="4.2" height="1.6"/><rect x="5" y="0.5" width="4.2" height="1.6"/><rect x="10" y="0.5" width="4.2" height="1.6"/><rect x="0" y="3.5" width="4.2" height="1.6"/><rect x="5" y="3.5" width="4.2" height="1.6"/><rect x="10" y="3.5" width="4.2" height="1.6"/><rect x="0" y="6.5" width="4.2" height="1.6"/><rect x="5" y="6.5" width="4.2" height="1.6"/><rect x="10" y="6.5" width="4.2" height="1.6"/><rect x="0" y="9.5" width="4.2" height="1.6"/><rect x="5" y="9.5" width="4.2" height="1.6"/><rect x="10" y="9.5" width="4.2" height="1.6"/></g></svg>
<div class="a calbl" style="left:1529px;width:100px;top:782px">Week</div>
<svg class="a" style="left:1627px;top:763px" width="15" height="15" viewBox="0 0 15 15"><rect x="0" y="0" width="15" height="15" rx="2" fill="#232629"/><rect x="1.8" y="5" width="11.4" height="8.2" fill="#c3c3c3"/><g fill="#232629"><rect x="3.2" y="6.4" width="2" height="2"/><rect x="6.5" y="6.4" width="2" height="2"/><rect x="9.8" y="6.4" width="2" height="2"/><rect x="3.2" y="9.6" width="2" height="2"/><rect x="6.5" y="9.6" width="2" height="2"/></g></svg>
<div class="a calbl" style="left:1584px;width:100px;top:782px">Month</div>
<svg class="a" style="left:1682px;top:763px" width="14" height="14" viewBox="0 0 14 14"><g fill="#232629"><rect x="0" y="0" width="4" height="4"/><rect x="5" y="0" width="4" height="4"/><rect x="10" y="0" width="4" height="4"/><rect x="0" y="5" width="4" height="4"/><rect x="5" y="5" width="4" height="4"/><rect x="10" y="5" width="4" height="4"/><rect x="0" y="10" width="4" height="4"/><rect x="5" y="10" width="4" height="4"/><rect x="10" y="10" width="4" height="4"/></g></svg>
<div class="a calbl" style="left:1639px;width:100px;top:782px">Year</div>
<svg class="a" style="left:1731px;top:769px" width="17" height="17" viewBox="0 0 17 17"><circle cx="7" cy="7" r="5.6" fill="none" stroke="#232629" stroke-width="2"/><path d="M11 11l4.5 4.5" stroke="#232629" stroke-width="2.2"/></svg>
<svg class="a" style="left:1779px;top:770px" width="14" height="14" viewBox="0 0 14 14"><rect x="0" y="0" width="14" height="14" rx="1.5" fill="#232629"/><g fill="#e8e8e8"><rect x="1.5" y="4" width="11" height="0.9"/><rect x="1.5" y="7" width="11" height="0.9"/><rect x="1.5" y="10" width="11" height="0.9"/><rect x="4.2" y="4" width="0.9" height="9"/><rect x="7" y="4" width="0.9" height="9"/><rect x="9.8" y="4" width="0.9" height="9"/></g></svg>
<svg class="a" style="left:1822px;top:769px" width="16" height="16" viewBox="0 0 16 16"><g fill="#232629"><rect x="0" y="2" width="15" height="2"/><rect x="0" y="7" width="15" height="2"/><rect x="0" y="12" width="15" height="2"/></g></svg>
<div class="a" style="left:1855px;top:761px;width:1px;height:33px;background:#cfcfcf"></div>
<div class="a" style="left:1868.5px;top:778.5px;width:8.5px;height:1.3px;background:#232629"></div>
<div class="a" style="left:1896.5px;top:773px;width:8.5px;height:8px;border:1.3px solid #232629"></div>
<svg class="a" style="left:1920px;top:768px" width="18" height="18" viewBox="0 0 18 18"><circle cx="9" cy="9" r="8.9" fill="#3daee9"/><path d="M5.8 5.8l6.4 6.4M12.2 5.8l-6.4 6.4" stroke="#fff" stroke-width="2.4"/></svg>
<div class="a" style="left:1362px;top:814px;font-size:22px;line-height:24px;color:#4aaee2;font-weight:bold">March</div>
<div class="a" style="left:1834px;width:100px;text-align:right;top:814px;font-size:22px;line-height:24px;color:#7f7f7f;font-weight:bold">2026</div>
<div class="a" style="left:1356px;top:851px;font-size:13px;line-height:15px;color:#7f8c8d;font-weight:bold">SUN</div>
<div class="a" style="left:1441px;top:851px;font-size:13px;line-height:15px;color:#7f8c8d;font-weight:bold">MON</div>
<div class="a" style="left:1532px;top:851px;font-size:13px;line-height:15px;color:#7f8c8d;font-weight:bold">TUE</div>
<div class="a" style="left:1614px;top:851px;font-size:13px;line-height:15px;color:#7f8c8d;font-weight:bold">WED</div>
<div class="a" style="left:1703px;top:851px;font-size:13px;line-height:15px;color:#7f8c8d;font-weight:bold">THU</div>
<div class="a" style="left:1786px;top:851px;font-size:13px;line-height:15px;color:#7f8c8d;font-weight:bold">FRI</div>
<div class="a" style="left:1864px;top:851px;font-size:13px;line-height:15px;color:#7f8c8d;font-weight:bold">SAT</div>
<div class="a" style="left:1606px;top:1216px;width:340px;height:90px;background:#f9f9f9"></div>
<div class="a" style="left:1522px;top:1045px;width:84px;height:85px;background:#a2d5f2"></div>
<div class="a" style="left:1350px;top:872px;width:596px;height:1px;background:#dcdcdc"></div>
<div class="a" style="left:1350px;top:958px;width:596px;height:1px;background:#dcdcdc"></div>
<div class="a" style="left:1350px;top:1044px;width:596px;height:1px;background:#dcdcdc"></div>
<div class="a" style="left:1350px;top:1130px;width:596px;height:1px;background:#dcdcdc"></div>
<div class="a" style="left:1350px;top:1216px;width:596px;height:1px;background:#dcdcdc"></div>
<div class="a" style="left:1436px;top:872px;width:1px;height:430px;background:#dcdcdc"></div>
<div class="a" style="left:1521px;top:872px;width:1px;height:430px;background:#dcdcdc"></div>
<div class="a" style="left:1606px;top:872px;width:1px;height:430px;background:#dcdcdc"></div>
<div class="a" style="left:1691px;top:872px;width:1px;height:430px;background:#dcdcdc"></div>
<div class="a" style="left:1776px;top:872px;width:1px;height:430px;background:#dcdcdc"></div>
<div class="a" style="left:1861px;top:872px;width:1px;height:430px;background:#dcdcdc"></div>
<div class="a" style="left:1357px;top:879px;font-size:13px;line-height:16px;color:#232629;letter-spacing:0.3px">1</div>
<div class="a" style="left:1443px;top:879px;font-size:13px;line-height:16px;color:#232629;letter-spacing:0.3px">2</div>
<div class="a" style="left:1528px;top:879px;font-size:13px;line-height:16px;color:#232629;letter-spacing:0.3px">3</div>
<div class="a" style="left:1613px;top:879px;font-size:13px;line-height:16px;color:#232629;letter-spacing:0.3px">4</div>
<div class="a" style="left:1698px;top:879px;font-size:13px;line-height:16px;color:#232629;letter-spacing:0.3px">5</div>
<div class="a" style="left:1783px;top:879px;font-size:13px;line-height:16px;color:#232629;letter-spacing:0.3px">6</div>
<div class="a" style="left:1868px;top:879px;font-size:13px;line-height:16px;color:#232629;letter-spacing:0.3px">7</div>
<div class="a" style="left:1357px;top:965px;font-size:13px;line-height:16px;color:#232629;letter-spacing:0.3px">8</div>
<div class="a" style="left:1443px;top:965px;font-size:13px;line-height:16px;color:#232629;letter-spacing:0.3px">9</div>
<div class="a" style="left:1528px;top:965px;font-size:13px;line-height:16px;color:#232629;letter-spacing:0.3px">10</div>
<div class="a" style="left:1613px;top:965px;font-size:13px;line-height:16px;color:#232629;letter-spacing:0.3px">11</div>
<div class="a" style="left:1698px;top:965px;font-size:13px;line-height:16px;color:#232629;letter-spacing:0.3px">12</div>
<div class="a" style="left:1783px;top:965px;font-size:13px;line-height:16px;color:#232629;letter-spacing:0.3px">13</div>
<div class="a" style="left:1868px;top:965px;font-size:13px;line-height:16px;color:#232629;letter-spacing:0.3px">14</div>
<div class="a" style="left:1357px;top:1051px;font-size:13px;line-height:16px;color:#232629;letter-spacing:0.3px">15</div>
<div class="a" style="left:1443px;top:1051px;font-size:13px;line-height:16px;color:#232629;letter-spacing:0.3px">16</div>
<div class="a" style="left:1528px;top:1051px;font-size:13px;line-height:16px;color:#232629;letter-spacing:0.3px">17</div>
<div class="a" style="left:1613px;top:1051px;font-size:13px;line-height:16px;color:#232629;letter-spacing:0.3px">18</div>
<div class="a" style="left:1698px;top:1051px;font-size:13px;line-height:16px;color:#232629;letter-spacing:0.3px">19</div>
<div class="a" style="left:1783px;top:1051px;font-size:13px;line-height:16px;color:#232629;letter-spacing:0.3px">20</div>
<div class="a" style="left:1868px;top:1051px;font-size:13px;line-height:16px;color:#232629;letter-spacing:0.3px">21</div>
<div class="a" style="left:1357px;top:1137px;font-size:13px;line-height:16px;color:#232629;letter-spacing:0.3px">22</div>
<div class="a" style="left:1443px;top:1137px;font-size:13px;line-height:16px;color:#232629;letter-spacing:0.3px">23</div>
<div class="a" style="left:1528px;top:1137px;font-size:13px;line-height:16px;color:#232629;letter-spacing:0.3px">24</div>
<div class="a" style="left:1613px;top:1137px;font-size:13px;line-height:16px;color:#232629;letter-spacing:0.3px">25</div>
<div class="a" style="left:1698px;top:1137px;font-size:13px;line-height:16px;color:#232629;letter-spacing:0.3px">26</div>
<div class="a" style="left:1783px;top:1137px;font-size:13px;line-height:16px;color:#232629;letter-spacing:0.3px">27</div>
<div class="a" style="left:1868px;top:1137px;font-size:13px;line-height:16px;color:#232629;letter-spacing:0.3px">28</div>
<div class="a" style="left:1357px;top:1223px;font-size:13px;line-height:16px;color:#232629;letter-spacing:0.3px">29</div>
<div class="a" style="left:1443px;top:1223px;font-size:13px;line-height:16px;color:#232629;letter-spacing:0.3px">30</div>
<div class="a" style="left:1528px;top:1223px;font-size:13px;line-height:16px;color:#232629;letter-spacing:0.3px">31</div>
<div class="a" style="left:1613px;top:1223px;font-size:13px;line-height:16px;color:#8a8a8a;letter-spacing:0.3px">1</div>
<div class="a" style="left:1698px;top:1223px;font-size:13px;line-height:16px;color:#8a8a8a;letter-spacing:0.3px">2</div>
<div class="a" style="left:1783px;top:1223px;font-size:13px;line-height:16px;color:#8a8a8a;letter-spacing:0.3px">3</div>
<div class="a" style="left:1868px;top:1223px;font-size:13px;line-height:16px;color:#8a8a8a;letter-spacing:0.3px">4</div>
</body></html>
